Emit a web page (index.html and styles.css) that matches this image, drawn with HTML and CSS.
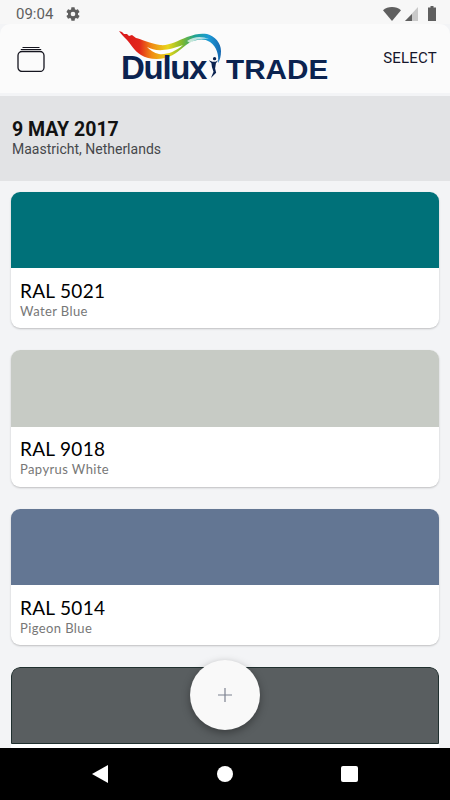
FILE: index.html
```html
<!DOCTYPE html>
<html>
<head>
  <link rel="stylesheet" href="styles.css">
</head>
<body>
  <div class="screen">
    <div class="status-bar">
      <div class="status-left">
        <span class="time">09:04</span>
        <svg class="gear" width="16" height="16" viewBox="0 0 24 24"><path fill="#5f5f5f" d="M19.4 13c.04-.33.1-.66.1-1s-.06-.67-.1-1l2.1-1.65c.2-.15.25-.42.12-.64l-2-3.46c-.12-.22-.39-.3-.61-.22l-2.49 1c-.52-.4-1.08-.73-1.69-.98l-.38-2.65A.49.49 0 0 0 14 2h-4c-.25 0-.46.18-.49.42l-.38 2.65c-.61.25-1.17.59-1.69.98l-2.49-1a.5.5 0 0 0-.61.22l-2 3.46c-.13.22-.07.49.12.64L4.57 11c-.04.33-.07.66-.07 1s.03.67.07 1l-2.11 1.65c-.19.15-.25.42-.12.64l2 3.46c.12.22.39.3.61.22l2.49-1c.52.4 1.08.73 1.69.98l.38 2.65c.03.24.24.42.49.42h4c.25 0 .46-.18.49-.42l.38-2.65c.61-.25 1.17-.59 1.69-.98l2.49 1c.23.09.49 0 .61-.22l2-3.46c.12-.22.07-.49-.12-.64L19.4 13zM12 15.5a3.5 3.5 0 1 1 0-7 3.5 3.5 0 0 1 0 7z"/></svg>
      </div>
      <div class="status-right">
        <svg width="18" height="14" viewBox="0 0 18 14"><path fill="#5f5f5f" d="M0 3.2C2.4 1.2 5.500 0 9 0s6.600 1.200 9 3.200L9 14z"/></svg>
        <svg width="14" height="14" viewBox="0 0 14 14"><path fill="#c9c9c9" d="M13 0v14H0z"/><path fill="#5f5f5f" d="M7 7v7H0z"/></svg>
        <svg class="battery" width="8" height="15" viewBox="0 0 8 15"><path fill="#5f5f5f" d="M2.500 0h3v1.500H8V15H0V1.500h2.500z"/></svg>
      </div>
    </div>

    <div class="app">
      <header class="top-bar">
        <svg class="stack-icon" width="28" height="26" viewBox="0 0 28 26" fill="none" stroke="#15151f">
          <path stroke-width="1" d="M5.500 1.500h17M3.800 3.500h20.400"/>
          <rect x="1" y="5.500" width="26" height="20" rx="4" stroke-width="1.300"/>
        </svg>
        <div class="logo">
          <svg class="swoosh" width="102" height="34" viewBox="0 0 102 34">
            <defs>
              <linearGradient id="paint" x1="0" y1="0" x2="1" y2="0">
                <stop offset="0" stop-color="#d8161c"/>
                <stop offset="0.2" stop-color="#e2261a"/>
                <stop offset="0.32" stop-color="#f08a14"/>
                <stop offset="0.48" stop-color="#e8d61a"/>
                <stop offset="0.62" stop-color="#7fb92f"/>
                <stop offset="0.74" stop-color="#1fa38f"/>
                <stop offset="0.88" stop-color="#1c9ad6"/>
                <stop offset="1" stop-color="#1668b0"/>
              </linearGradient>
            </defs>
            <path fill="url(#paint)" d="M0 0 3 1 5 3 8 3 10 5 13 4 17 7C22 8 30 12 41 14 50 15 58 10 68 6 76 3 82 2 88 3 96 5 102 12 102 20 102 25 101 29 99 32 100 24 98 16 91 11 85 7 77 8 70 12 62 17 56 25 46 27 38 29 28 28 22 24 15 20 12 13 8 9 5 6 2 3 0 0Z"/>
            <path fill="#fff" d="M28 16C36 20 45 21 64 14 56 21 47 24 40 23 35 22 31 19 28 16Z"/>
            <path fill="#fff" opacity=".7" d="M68 10C75 5 83 5 90 8 83 7 76 8 71 12Z"/>
          </svg>
          <div class="logo-text">
            <span class="logo-dulux">Dulux</span>
            <svg class="logo-man" width="12" height="21" viewBox="0 0 10 20"><path fill="#0b2350" d="M6.500 0a1.600 1.600 0 1 1 0 3.200 1.600 1.600 0 0 1 0-3.200zM1 3l3.500 1.500h3L10 3 7.800 6 7 11l1 4-5 5 2.500-6L4 9.500 3.500 6z"/></svg>
            <span class="logo-trade">TRADE</span>
          </div>
        </div>
        <span class="select-btn">SELECT</span>
      </header>
      <div class="header-gap"></div>

      <section class="date-band">
        <div class="date">9 MAY 2017</div>
        <div class="place">Maastricht, Netherlands</div>
      </section>

      <main class="list">
        <div class="card">
          <div class="swatch swatch-water"></div>
          <div class="card-body">
            <div class="ral">RAL 5021</div>
            <div class="colour-name">Water Blue</div>
          </div>
        </div>
        <div class="card">
          <div class="swatch swatch-papyrus"></div>
          <div class="card-body">
            <div class="ral">RAL 9018</div>
            <div class="colour-name">Papyrus White</div>
          </div>
        </div>
        <div class="card">
          <div class="swatch swatch-pigeon"></div>
          <div class="card-body">
            <div class="ral">RAL 5014</div>
            <div class="colour-name">Pigeon Blue</div>
          </div>
        </div>
        <div class="card card-cut">
          <div class="swatch swatch-basalt"></div>
        </div>
      </main>

      <button class="fab">
        <svg width="16" height="16" viewBox="0 0 16 16"><path stroke="#7d8290" stroke-width="1.200" d="M8 1v14M1 8h14"/></svg>
      </button>
    </div>

    <nav class="nav-bar">
      <svg width="16" height="18" viewBox="0 0 16 18"><path fill="#fff" d="M16 0v18L0 9z"/></svg>
      <span class="nav-home"></span>
      <span class="nav-square"></span>
    </nav>
  </div>
</body>
</html>
```

FILE: styles.css
```css
* {
  box-sizing: border-box;
}

html, body {
  margin: 0;
  padding: 0;
}

body {
  width: 450px;
  height: 800px;
  overflow: hidden;
  font-family: "Roboto", sans-serif;
}

.screen {
  width: 450px;
  height: 800px;
  display: flex;
  flex-direction: column;
  background: #f3f4f6;
}

.status-bar {
  height: 24px;
  padding: 3px 14px 0 16px;
  display: flex;
  justify-content: space-between;
  align-items: center;
  background: #f7f7f7;
}

.status-left {
  display: flex;
  align-items: center;
  gap: 12px;
}

.time {
  font-size: 15px;
  color: #5f5f5f;
}

.status-right {
  display: flex;
  align-items: center;
  gap: 4px;
}

.battery {
  margin-left: 5px;
}

.app {
  position: relative;
  flex: 1;
  display: flex;
  flex-direction: column;
  overflow: hidden;
}

.top-bar {
  height: 69px;
  padding: 0 13px 0 17px;
  display: grid;
  grid-template-columns: 102px 1fr auto;
  align-items: center;
  background: #fbfbfb;
  border-radius: 10px 10px 0 0;
}

.stack-icon {
  margin-top: 1px;
}

.logo {
  align-self: start;
  margin-top: 7px;
  width: 212px;
}

.swoosh {
  display: block;
}

.logo-text {
  margin-top: -10px;
  display: flex;
  align-items: baseline;
  color: #0b2350;
  font-family: "Liberation Sans", sans-serif;
  font-weight: bold;
  height: 26px;
}

.logo-dulux {
  margin-left: 2px;
  font-size: 33px;
  line-height: 26px;
  letter-spacing: -1.3px;
}

.logo-man {
  margin-left: 1px;
  align-self: flex-start;
  margin-top: 2px;
}

.logo-trade {
  margin-left: 7px;
  font-size: 28px;
  line-height: 26px;
  transform: scaleX(1.06);
  transform-origin: left;
}

.select-btn {
  font-size: 15px;
  letter-spacing: 0.2px;
  color: #15162b;
  margin-top: -2px;
}

.header-gap {
  height: 3px;
  background: #f3f4f6;
}

.date-band {
  height: 85px;
  padding: 24px 12px 0;
  background: #e2e3e5;
}

.date {
  font-size: 19.5px;
  font-weight: 700;
  line-height: 20px;
  color: #121212;
}

.place {
  font-size: 14px;
  line-height: 18px;
  color: #45474b;
}

.list {
  flex: 1;
  padding: 11px 11px 0;
  display: flex;
  flex-direction: column;
  gap: 22.2px;
  overflow: hidden;
}

.card {
  flex: none;
  height: 136.2px;
  border-radius: 9px;
  background: #fff;
  overflow: hidden;
  box-shadow: 0 1px 2px rgba(0,0,0,0.22);
}

.card-cut {
  height: 81px;
  border-radius: 9px 9px 0 0;
  box-shadow: none;
}

.swatch {
  height: 76.4px;
}

.swatch-water {
  background: #007179;
}

.swatch-papyrus {
  background: #c7cbc5;
}

.swatch-pigeon {
  background: #637693;
}

.swatch-basalt {
  background: #595e60;
  border: 1px solid #20302f;
  border-radius: 9px 9px 0 0;
}

.card-body {
  padding: 10.5px 9px 0;
}

.ral {
  font-family: "Lato", sans-serif;
  font-size: 19px;
  line-height: 24px;
  color: #000;
  letter-spacing: 0.3px;
}

.colour-name {
  font-family: "Lato", sans-serif;
  font-size: 13px;
  line-height: 17px;
  color: #777;
  letter-spacing: 0.4px;
}

.fab {
  position: absolute;
  left: 190px;
  top: 636px;
  width: 70px;
  height: 70px;
  padding: 0;
  border: none;
  border-radius: 50%;
  background: #f9f9f9;
  display: flex;
  justify-content: center;
  align-items: center;
  box-shadow: 0 3px 8px rgba(0,0,0,0.35);
}

.nav-bar {
  height: 52px;
  flex: none;
  background: #000;
  display: grid;
  grid-template-columns: 1fr 1fr 1fr;
  justify-items: center;
  align-items: center;
  padding: 0 38px 0 37px;
}

.nav-home {
  width: 16px;
  height: 16px;
  border-radius: 50%;
  background: #fff;
}

.nav-square {
  width: 17px;
  height: 16px;
  border-radius: 2px;
  background: #fff;
}
```
